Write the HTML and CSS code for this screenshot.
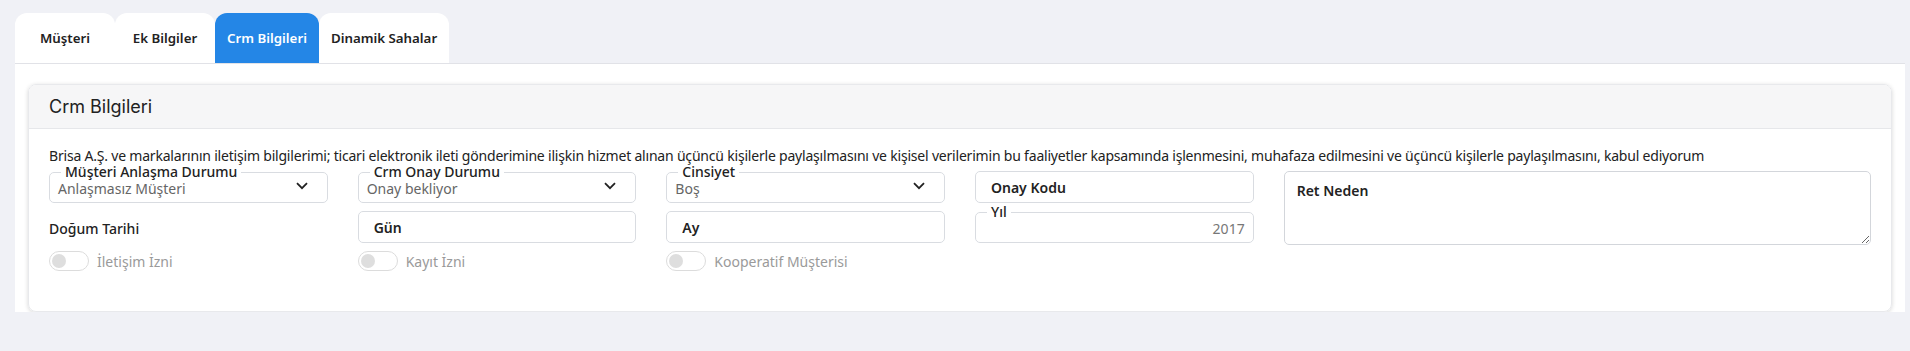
FILE: index.html
```html
<!DOCTYPE html>
<html lang="tr">
<head>
    <meta charset="UTF-8">
    <meta name="viewport" content="width=device-width, initial-scale=1.0">
    <title>Crm Bilgileri</title>
    <link rel="stylesheet" href="styles.css">
</head>
<body>
    <ul class="tabs">
        <li class="tab">Müşteri</li>
        <li class="tab">Ek Bilgiler</li>
        <li class="tab active">Crm Bilgileri</li>
        <li class="tab">Dinamik Sahalar</li>
    </ul>

    <div class="tab-panel">
        <div class="card">
            <div class="card-header">Crm Bilgileri</div>
            <div class="card-body">
                <p class="consent">Brisa A.Ş. ve markalarının iletişim bilgilerimi; ticari elektronik ileti gönderimine ilişkin hizmet alınan üçüncü kişilerle paylaşılmasını ve kişisel verilerimin bu faaliyetler kapsamında işlenmesini, muhafaza edilmesini ve üçüncü kişilerle paylaşılmasını, kabul ediyorum</p>

                <div class="form-grid">
                    <div class="cell">
                        <fieldset class="select-box">
                            <legend>Müşteri Anlaşma Durumu</legend>
                            <div class="select-value">
                                <span>Anlaşmasız Müşteri</span>
                                <svg class="chevron" width="12" height="8" viewBox="0 0 12 8"><path d="M1 1.2 6 6.2 11 1.2" fill="none" stroke="#222" stroke-width="1.8"/></svg>
                            </div>
                        </fieldset>
                    </div>
                    <div class="cell">
                        <fieldset class="select-box">
                            <legend>Crm Onay Durumu</legend>
                            <div class="select-value">
                                <span>Onay bekliyor</span>
                                <svg class="chevron" width="12" height="8" viewBox="0 0 12 8"><path d="M1 1.2 6 6.2 11 1.2" fill="none" stroke="#222" stroke-width="1.8"/></svg>
                            </div>
                        </fieldset>
                    </div>
                    <div class="cell">
                        <fieldset class="select-box">
                            <legend>Cinsiyet</legend>
                            <div class="select-value">
                                <span>Boş</span>
                                <svg class="chevron" width="12" height="8" viewBox="0 0 12 8"><path d="M1 1.2 6 6.2 11 1.2" fill="none" stroke="#222" stroke-width="1.8"/></svg>
                            </div>
                        </fieldset>
                    </div>
                    <div class="cell">
                        <input class="text-box" type="text" placeholder="Onay Kodu">
                    </div>
                    <div class="cell cell-notes">
                        <textarea class="notes" placeholder="Ret Neden"></textarea>
                    </div>

                    <div class="cell cell-mid">
                        <span class="field-label">Doğum Tarihi</span>
                    </div>
                    <div class="cell">
                        <input class="text-box" type="text" placeholder="Gün">
                    </div>
                    <div class="cell">
                        <input class="text-box" type="text" placeholder="Ay">
                    </div>
                    <div class="cell">
                        <fieldset class="select-box">
                            <legend>Yıl</legend>
                            <div class="select-value year">2017</div>
                        </fieldset>
                    </div>

                    <div class="cell switch-cell">
                        <span class="switch"><span class="knob"></span></span>
                        <span class="switch-label">İletişim İzni</span>
                    </div>
                    <div class="cell switch-cell">
                        <span class="switch"><span class="knob"></span></span>
                        <span class="switch-label">Kayıt İzni</span>
                    </div>
                    <div class="cell switch-cell">
                        <span class="switch"><span class="knob"></span></span>
                        <span class="switch-label">Kooperatif Müşterisi</span>
                    </div>
                </div>
            </div>
        </div>
    </div>
</body>
</html>
```

FILE: styles.css
```css
body {
    margin: 0;
    background: #f0f1f6;
    font-family: "Noto Sans", "Open Sans", sans-serif;
    font-size: 14px;
    color: #222;
}
.tabs {
    display: flex;
    list-style: none;
    margin: 0;
    padding: 13px 15px 0;
}
.tab {
    min-width: 100px;
    height: 50px;
    padding: 0 12px;
    box-sizing: border-box;
    display: flex;
    align-items: center;
    justify-content: center;
    background: #fff;
    border-radius: 12px 12px 0 0;
    font-size: 13.3px;
    font-weight: 600;
    color: #222;
}
.tab.active {
    background: #2486e6;
    color: #fff;
}
.tab-panel {
    margin: 0 5px 0 15px;
    padding: 20px 13px 0;
    background: #fff;
    border-top: 1px solid #e1e2e7;
}
.card {
    border: 1px solid #e8e9ec;
    border-radius: 8px;
    box-shadow: 0 1px 4px rgba(0, 0, 0, 0.16);
    overflow: hidden;
}
.card-header {
    height: 43px;
    padding: 0 20px;
    display: flex;
    align-items: center;
    background: #f6f6f7;
    border-bottom: 1px solid #e6e7ea;
    font-family: Inter, sans-serif;
    font-size: 18px;
    color: #222;
}
.card-body {
    padding: 19px 20px 40px;
}
.consent {
    margin: 0;
    line-height: 16px;
    white-space: nowrap;
    letter-spacing: -0.2px;
}
.form-grid {
    display: grid;
    grid-template-columns: repeat(6, 1fr);
    grid-template-rows: 38px 40px auto;
    column-gap: 30px;
    margin-top: 1px;
}
.cell {
    display: flex;
    flex-direction: column;
    justify-content: flex-end;
}
.cell-notes {
    grid-column: span 2;
    grid-row: span 2;
    justify-content: flex-start;
    padding-top: 6px;
}
.cell-mid {
    justify-content: center;
    padding-top: 10px;
}
.select-box {
    margin: 0;
    padding: 0 8px 5px;
    border: 1px solid #d9dce1;
    border-radius: 5px;
    min-width: 0;
}
.select-box legend {
    margin-left: 3px;
    padding: 0 4px;
    font-size: 14px;
    line-height: 14px;
    font-weight: 500;
    color: #222;
}
.select-value {
    display: flex;
    align-items: center;
    justify-content: space-between;
    height: 18px;
    color: #666;
}
.chevron {
    margin-right: 11px;
    margin-top: -4px;
}
.select-value.year {
    justify-content: flex-end;
    color: #777;
}
.text-box {
    box-sizing: border-box;
    width: 100%;
    height: 32px;
    padding: 0 15px;
    border: 1px solid #d9dce1;
    border-radius: 5px;
    font-family: inherit;
    font-size: 14px;
}
.text-box::placeholder,
.notes::placeholder {
    color: #222;
    font-weight: 600;
}
.notes {
    box-sizing: border-box;
    flex-shrink: 0;
    width: 100%;
    height: 74px;
    padding: 9px 12px;
    border: 1px solid #d3d6db;
    border-radius: 5px;
    font-family: inherit;
    font-size: 14px;
}
.field-label {
    font-weight: 500;
}
.switch-cell {
    flex-direction: row;
    align-items: center;
    justify-content: flex-start;
    margin-top: 8px;
}
.switch {
    box-sizing: border-box;
    width: 40px;
    height: 20px;
    padding: 2px;
    border: 1px solid #dcdcdc;
    border-radius: 10px;
    display: flex;
    align-items: center;
}
.knob {
    width: 14px;
    height: 14px;
    border-radius: 50%;
    background: #dedede;
}
.switch-label {
    margin-left: 8px;
    color: #9a9a9a;
}
```
